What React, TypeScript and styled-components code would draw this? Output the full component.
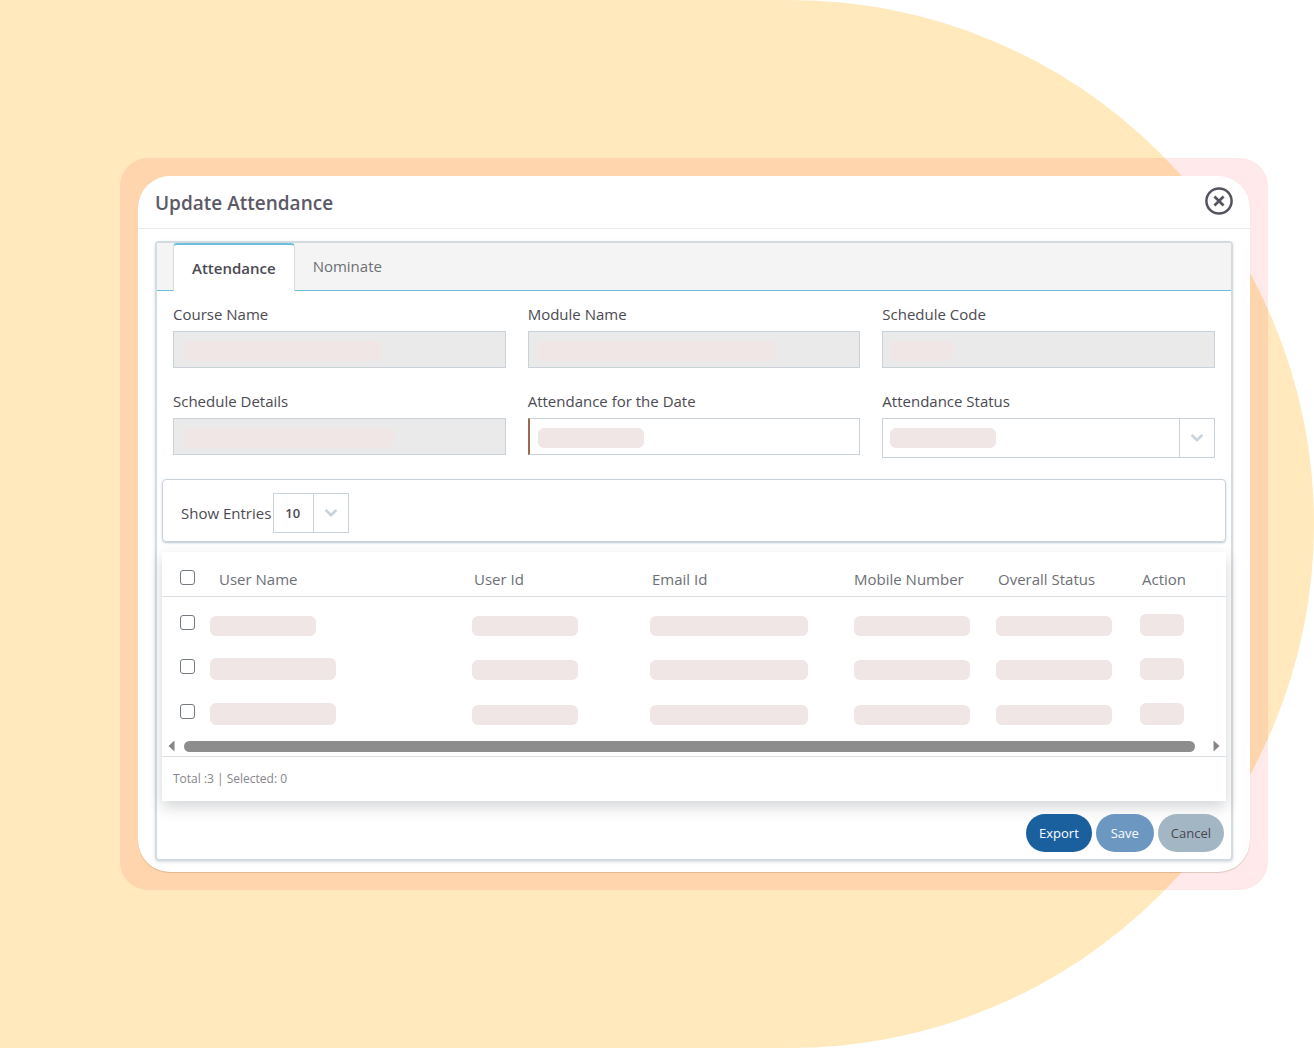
import React, { useState } from "react";
import styled, { createGlobalStyle } from "styled-components";

const color = {
  text: "#4b4a52",
  muted: "#6c6f76",
  line: "#d3dbe0",
  field: "#c8d2d8",
  accent: "#6cc0dc",
  mask: "#f0e6e5",
};

const GlobalStyle = createGlobalStyle`
  *, *::before, *::after { box-sizing: border-box; }
  body {
    margin: 0;
    background: #ffffff;
    color: ${color.text};
    font: 15px/20px "Open Sans", "Noto Sans", sans-serif;
  }
  button, input, select { font: inherit; color: inherit; margin: 0; }
`;

const Page = styled.main`
  display: flex;
  align-items: center;
  min-height: 100vh;
  padding: 24px 46px 24px 120px;
  background: #ffe9bd;
  border-radius: 0 9999px 9999px 0;
`;

const Frame = styled.div`
  flex: 1;
  min-width: 0;
  padding: 18px;
  border-radius: 28px;
  background: rgba(255, 10, 20, 0.09);
`;

const Modal = styled.section`
  border-radius: 32px;
  background: #ffffff;
  box-shadow: 0 1px 1px rgba(120, 90, 60, 0.25);
`;

const ModalHeader = styled.header`
  display: flex;
  align-items: center;
  justify-content: space-between;
  height: 53px;
  padding: 0 17px 0 17px;
  border-bottom: 1px solid #ebebed;
`;

const Title = styled.h1`
  margin: 0;
  padding-top: 2px;
  font-size: 19px;
  line-height: 28px;
  font-weight: 600;
  color: #5b5966;
`;

const CloseButton = styled.button`
  display: flex;
  padding: 0 0 2px;
  border: 0;
  background: none;
  cursor: pointer;
`;

const ModalBody = styled.div`
  padding: 12px 17px 11px;
`;

const Panel = styled.div`
  border: 2px solid ${color.line};
  border-radius: 4px;
  box-shadow: 0 1px 3px rgba(120, 140, 155, 0.3);
`;

const TabBar = styled.div`
  display: flex;
  height: 48px;
  padding: 0 16px;
  background: #f4f4f4;
  border-bottom: 1px solid ${color.accent};
`;

const Tab = styled.button<{ $active?: boolean }>`
  height: ${(p) => (p.$active ? "48px" : "46px")};
  min-width: 104px;
  padding: 0 18px;
  border: 0 solid ${color.line};
  border-width: ${(p) => (p.$active ? "2px 1px 0" : "0")};
  border-top-color: ${color.accent};
  border-radius: 4px 4px 0 0;
  background: ${(p) => (p.$active ? "#ffffff" : "transparent")};
  color: ${(p) => (p.$active ? color.text : color.muted)};
  font-weight: ${(p) => (p.$active ? 600 : 400)};
  cursor: pointer;
`;

const FieldGrid = styled.div`
  display: grid;
  grid-template-columns: repeat(3, 1fr);
  column-gap: 22px;
  row-gap: 23px;
  padding: 13px 16px 21px;
`;

const Field = styled.div`
  display: flex;
  flex-direction: column;
  gap: 7px;
`;

const Label = styled.label`
  line-height: 20px;
`;

const Control = styled.div<{ $width?: string }>`
  position: relative;
  width: ${(p) => p.$width ?? "100%"};
`;

const TextInput = styled.input<{ $required?: boolean }>`
  display: block;
  width: 100%;
  height: 37px;
  padding: 0 9px;
  border: 1px solid ${color.field};
  border-left: ${(p) => (p.$required ? "2px solid #a0674f" : `1px solid ${color.field}`)};
  border-radius: 0;
  background: #ffffff;

  &:read-only {
    background: #eaeaea;
  }
`;

const Select = styled.select`
  display: block;
  width: 100%;
  height: 40px;
  padding: 0 36px 0 11px;
  border: 1px solid ${color.field};
  border-radius: 0;
  background: #ffffff;
  appearance: none;
  font-size: 13px;
  font-weight: 600;
`;

const SelectArrow = styled.span`
  position: absolute;
  inset: 1px 1px 1px auto;
  display: grid;
  place-items: center;
  width: 35px;
  border-left: 1px solid ${color.field};
  pointer-events: none;
`;

const Mask = styled.span<{ $w: number; $h?: number }>`
  display: block;
  width: ${(p) => p.$w}px;
  max-width: 100%;
  height: ${(p) => p.$h ?? 20}px;
  border-radius: 6px;
  background: ${color.mask};
`;

const FieldMask = styled(Mask)<{ $left?: number }>`
  position: absolute;
  top: 10px;
  left: ${(p) => p.$left ?? 10}px;
  pointer-events: none;
`;

const EntriesBar = styled.div`
  display: flex;
  align-items: center;
  gap: 2px;
  height: 63px;
  margin: 0 5px 10px;
  padding: 5px 18px 0;
  border: 1px solid ${color.field};
  border-radius: 4px;
  box-shadow: 0 1px 2px rgba(120, 145, 160, 0.5);
`;

const GridCard = styled.div`
  margin: 0 5px;
  background: #ffffff;
  box-shadow: 0 6px 14px rgba(40, 45, 55, 0.2);
`;

const Table = styled.table`
  width: 100%;
  table-layout: fixed;
  border-collapse: collapse;
`;

const HeadCell = styled.th<{ $indent?: number; $check?: boolean }>`
  height: 44px;
  padding: ${(p) => (p.$check ? 7 : 11)}px 0 0 ${(p) => p.$indent ?? 2}px;
  border-bottom: 1px solid #dcdfe1;
  color: ${color.muted};
  font-weight: 400;
  text-align: left;
  white-space: nowrap;
`;

const Cell = styled.td<{ $check?: boolean; $tall?: boolean }>`
  height: 45px;
  padding: ${(p) => (p.$check ? "18px 0 0 18px" : p.$tall ? "17px 0 0" : "19px 0 0")};
  vertical-align: top;
`;

const Checkbox = styled.input`
  display: block;
  width: 15px;
  height: 15px;
  border: 1px solid #757b82;
  border-radius: 3px;
  background: #ffffff;
  appearance: none;

  &:checked {
    background: #1a609f;
  }
`;

const ScrollTrack = styled.div`
  display: flex;
  align-items: center;
  gap: 9px;
  height: 25px;
  padding: 5px 6px 0;
`;

const ScrollThumb = styled.div`
  flex: 1;
  height: 11px;
  margin-right: 9px;
  border-radius: 6px;
  background: #8d8d8d;
`;

const GridFooter = styled.div`
  height: 45px;
  padding: 12px 11px;
  border-top: 1px solid #dcdfe1;
  color: #85868a;
  font-size: 12px;
`;

const Actions = styled.div`
  display: flex;
  justify-content: flex-end;
  gap: 4px;
  padding: 13px 7px 7px;
`;

const ActionButton = styled.button<{ $bg: string; $fg?: string }>`
  min-width: 58px;
  height: 38px;
  padding: 0 13px;
  border: 0;
  border-radius: 20px;
  background: ${(p) => p.$bg};
  color: ${(p) => p.$fg ?? "#ffffff"};
  font-size: 13px;
  cursor: pointer;
`;

const CloseIcon = () => (
  <svg width="28" height="28" viewBox="0 0 28 28" fill="none" stroke="#56535f" aria-hidden="true">
    <circle cx="14" cy="14" r="12.6" strokeWidth="2.5" />
    <path d="M9.4 9.6l9.2 8.8M18.6 9.6l-9.2 8.8" strokeWidth="2.7" />
  </svg>
);

const Chevron = () => (
  <svg width="14" height="10" viewBox="0 0 14 10" fill="none" aria-hidden="true">
    <path d="M1.6 1.8L7 7.2l5.4-5.4" stroke="#c8d2d9" strokeWidth="2.6" />
  </svg>
);

const Arrow = ({ right }: { right?: boolean }) => (
  <svg width="7" height="12" viewBox="0 0 7 12" fill="#858585" aria-hidden="true">
    <path d={right ? "M0.5 0.5v11L6.5 6z" : "M6.5 0.5v11L0.5 6z"} />
  </svg>
);

const lockedFields = [
  { id: "course", label: "Course Name", mask: 199 },
  { id: "module", label: "Module Name", mask: 239 },
  { id: "code", label: "Schedule Code", mask: 64, left: 8 },
  { id: "details", label: "Schedule Details", mask: 211 },
];

const columns = [
  { title: "User Name", width: 262, indent: 9 },
  { title: "User Id", width: 178 },
  { title: "Email Id", width: 204 },
  { title: "Mobile Number", width: 142, indent: 0 },
  { title: "Overall Status", width: 144 },
  { title: "Action", width: 86 },
];
const gridWidth = 1064;

const rows = [
  [106, 106, 158, 116, 116, 44],
  [126, 106, 158, 116, 116, 44],
  [126, 106, 158, 116, 116, 44],
];

const isTall = (row: number, column: number) => column === 5 || (column === 0 && row > 0);

export default function App() {
  const [tab, setTab] = useState("Attendance");

  return (
    <>
      <GlobalStyle />
      <Page>
        <Frame>
          <Modal role="dialog" aria-labelledby="dialog-title">
            <ModalHeader>
              <Title id="dialog-title">Update Attendance</Title>
              <CloseButton type="button" aria-label="Close">
                <CloseIcon />
              </CloseButton>
            </ModalHeader>
            <ModalBody>
              <Panel>
                <TabBar role="tablist">
                  {["Attendance", "Nominate"].map((name) => (
                    <Tab
                      key={name}
                      type="button"
                      role="tab"
                      aria-selected={tab === name}
                      $active={tab === name}
                      onClick={() => setTab(name)}
                    >
                      {name}
                    </Tab>
                  ))}
                </TabBar>

                <FieldGrid>
                  {lockedFields.map((f) => (
                    <Field key={f.id}>
                      <Label htmlFor={f.id}>{f.label}</Label>
                      <Control>
                        <TextInput id={f.id} type="text" readOnly />
                        <FieldMask $w={f.mask} $left={f.left} />
                      </Control>
                    </Field>
                  ))}
                  <Field>
                    <Label htmlFor="date">Attendance for the Date</Label>
                    <Control>
                      <TextInput id="date" type="text" $required />
                      <FieldMask $w={106} />
                    </Control>
                  </Field>
                  <Field>
                    <Label htmlFor="status">Attendance Status</Label>
                    <Control>
                      <Select id="status">
                        <option value="" />
                      </Select>
                      <FieldMask $w={106} $left={8} />
                      <SelectArrow>
                        <Chevron />
                      </SelectArrow>
                    </Control>
                  </Field>
                </FieldGrid>

                <EntriesBar>
                  <Label htmlFor="entries">Show Entries</Label>
                  <Control $width="76px">
                    <Select id="entries" defaultValue="10">
                      <option>10</option>
                      <option>25</option>
                      <option>50</option>
                    </Select>
                    <SelectArrow>
                      <Chevron />
                    </SelectArrow>
                  </Control>
                </EntriesBar>

                <GridCard>
                  <Table>
                    <colgroup>
                      <col style={{ width: `${(48 / gridWidth) * 100}%` }} />
                      {columns.map((c) => (
                        <col key={c.title} style={{ width: `${(c.width / gridWidth) * 100}%` }} />
                      ))}
                    </colgroup>
                    <thead>
                      <tr>
                        <HeadCell $indent={18} $check>
                          <Checkbox type="checkbox" aria-label="Select all" />
                        </HeadCell>
                        {columns.map((c) => (
                          <HeadCell key={c.title} $indent={c.indent}>
                            {c.title}
                          </HeadCell>
                        ))}
                      </tr>
                    </thead>
                    <tbody>
                      {rows.map((row, r) => (
                        <tr key={r}>
                          <Cell $check>
                            <Checkbox type="checkbox" aria-label={`Select row ${r + 1}`} />
                          </Cell>
                          {row.map((w, c) => (
                            <Cell key={c} $tall={isTall(r, c)}>
                              <Mask $w={w} $h={isTall(r, c) ? 22 : 20} />
                            </Cell>
                          ))}
                        </tr>
                      ))}
                    </tbody>
                  </Table>
                  <ScrollTrack>
                    <Arrow />
                    <ScrollThumb />
                    <Arrow right />
                  </ScrollTrack>
                  <GridFooter>Total :3 | Selected: 0</GridFooter>
                </GridCard>

                <Actions>
                  <ActionButton type="button" $bg="#1a609f">
                    Export
                  </ActionButton>
                  <ActionButton type="button" $bg="#6b97c1">
                    Save
                  </ActionButton>
                  <ActionButton type="button" $bg="#a3b6c4" $fg="#4b4650">
                    Cancel
                  </ActionButton>
                </Actions>
              </Panel>
            </ModalBody>
          </Modal>
        </Frame>
      </Page>
    </>
  );
}
